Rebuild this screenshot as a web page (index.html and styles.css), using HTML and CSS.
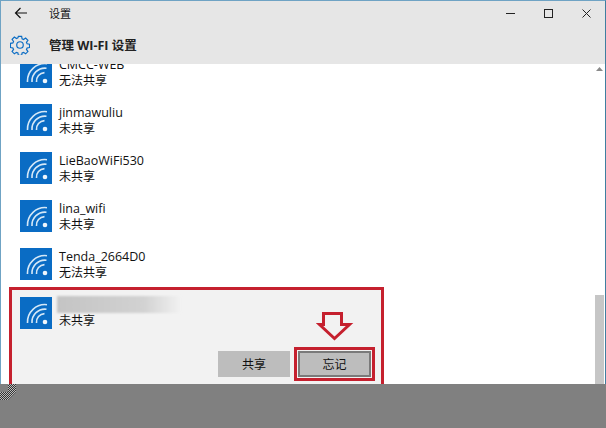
FILE: index.html
```html
<!DOCTYPE html>
<html lang="zh-CN">
<head>
    <meta charset="UTF-8">
    <meta name="viewport" content="width=device-width, initial-scale=1.0">
    <title>设置</title>
    <link rel="stylesheet" href="styles.css">
</head>
<body>
    <svg class="defs" width="0" height="0">
        <symbol id="wifi" viewBox="0 0 32 32">
            <rect width="32" height="32" fill="#0a6cc4"/>
            <g fill="none" stroke="#d5e8f7" stroke-width="1.6">
                <path d="M7.500 26A17.500 17.500 0 0 1 27 7.700"/>
                <path d="M12 26A13 13 0 0 1 26.500 12.200"/>
                <path d="M16.500 26A8.500 8.500 0 0 1 24.500 16.600"/>
            </g>
            <circle cx="25" cy="25" r="2.300" fill="#eef6fc"/>
        </symbol>
    </svg>
    <div class="window">
        <div class="titlebar">
            <svg class="back" width="14" height="12" viewBox="0 0 14 12"><path d="M13 6H1.500M6.500 1 1.500 6l5 5" fill="none" stroke="#111" stroke-width="1.200"/></svg>
            <span class="title">设置</span>
            <div class="controls">
                <span class="minimize"></span>
                <span class="maximize"></span>
                <svg width="9" height="9" viewBox="0 0 9 9"><path d="M.5.5l8 8M8.500.5l-8 8" stroke="#222" stroke-width="1"/></svg>
            </div>
        </div>
        <div class="header">
            <svg class="gear" width="20" height="20" viewBox="0 0 22 22" fill="none" stroke="#0a6cc4" stroke-width="1.300">
                <path d="M9.200 1.500h3.600l.5 2.700 1.600.7 2.300-1.600 2.500 2.500-1.600 2.300.7 1.600 2.700.5v3.600l-2.700.5-.7 1.600 1.600 2.300-2.500 2.500-2.300-1.600-1.600.7-.5 2.700H9.200l-.5-2.700-1.600-.7-2.300 1.600-2.500-2.500 1.600-2.300-.7-1.600-2.700-.5V9.200l2.700-.5.7-1.600-1.600-2.300 2.500-2.500 2.300 1.600 1.600-.7z"/>
                <circle cx="11" cy="11" r="3.600"/>
            </svg>
            <h1>管理 WI-FI 设置</h1>
        </div>
        <div class="content">
            <ul class="list">
                <li class="row">
                    <svg class="icon"><use href="#wifi"/></svg>
                    <div class="info"><div class="name">CMCC-WEB</div><div class="status">无法共享</div></div>
                </li>
                <li class="row">
                    <svg class="icon"><use href="#wifi"/></svg>
                    <div class="info"><div class="name">jinmawuliu</div><div class="status">未共享</div></div>
                </li>
                <li class="row">
                    <svg class="icon"><use href="#wifi"/></svg>
                    <div class="info"><div class="name">LieBaoWiFi530</div><div class="status">未共享</div></div>
                </li>
                <li class="row">
                    <svg class="icon"><use href="#wifi"/></svg>
                    <div class="info"><div class="name">lina_wifi</div><div class="status">未共享</div></div>
                </li>
                <li class="row">
                    <svg class="icon"><use href="#wifi"/></svg>
                    <div class="info"><div class="name">Tenda_2664D0</div><div class="status">无法共享</div></div>
                </li>
                <li class="row selected">
                    <div class="row-top">
                        <svg class="icon"><use href="#wifi"/></svg>
                        <div class="info"><div class="name blurred"></div><div class="status">未共享</div></div>
                    </div>
                    <div class="actions">
                        <button class="btn">共享</button>
                        <button class="btn forget">忘记</button>
                    </div>
                    <svg class="arrow" width="38" height="29" viewBox="0 0 38 29"><path d="M7.500 1.500H25.500V12.500H33.500L18.500 26.500 3.500 12.500H7.500Z" fill="#f2f2f2" stroke="#c5202e" stroke-width="3"/></svg>
                </li>
            </ul>
            <div class="scrollbar">
                <svg class="caret" width="7" height="4" viewBox="0 0 7 4"><path d="M0 4 3.500 0 7 4z" fill="#8a8a8a"/></svg>
                <span class="thumb"></span>
            </div>
        </div>
    </div>
    <div class="footer"><span class="glitch"></span></div>
</body>
</html>
```

FILE: styles.css
```css
* {
    box-sizing: border-box;
}
html, body {
    height: 100%;
}
body {
    margin: 0;
    display: flex;
    flex-direction: column;
    overflow: hidden;
    font-family: "Open Sans", "Noto Sans CJK SC", sans-serif;
    font-size: 12px;
    color: #111;
    background-color: #808080;
}
.defs {
    position: absolute;
}
.window {
    height: 384px;
    display: flex;
    flex-direction: column;
    background-color: #fff;
    border-top: 1px solid #6fa3c4;
    border-left: 1px solid #6fa3c4;
    border-right: 1px solid #3f7fa0;
}
.titlebar {
    height: 24px;
    display: flex;
    align-items: center;
    background-color: #e6e6e6;
    padding-left: 13px;
}
.title {
    margin-left: 21px;
    font-size: 11px;
}
.controls {
    margin-left: auto;
    display: flex;
    align-items: center;
    gap: 29px;
    padding-right: 14px;
}
.minimize {
    width: 9px;
    height: 1px;
    background-color: #222;
}
.maximize {
    width: 9px;
    height: 9px;
    border: 1px solid #222;
}
.header {
    height: 39px;
    display: flex;
    align-items: center;
    padding-left: 9px;
    background-color: #e6e6e6;
}
.header h1 {
    margin: 0 0 0 19px;
    font-size: 12.500px;
    font-weight: 700;
    color: #222;
}
.content {
    flex: 1;
    min-height: 0;
    display: flex;
    overflow: hidden;
}
.list {
    flex: 1;
    margin: -16px 0 0;
    padding: 0;
    list-style: none;
}
.row {
    height: 48px;
    display: flex;
    align-items: center;
    padding-left: 19px;
}
.icon {
    width: 32px;
    height: 32px;
    flex: none;
}
.info {
    margin-left: 7px;
    padding-top: 2px;
    line-height: 16px;
}
.name {
    height: 16px;
    font-size: 12.500px;
}
.status {
    font-size: 12px;
}
.selected {
    position: relative;
    display: block;
    width: 375px;
    height: 97px;
    margin: -1px 0 0 8px;
    padding: 6px 0 0 8px;
    background-color: #f2f2f2;
    border: 3px solid #c5202e;
    border-bottom: none;
}
.row-top {
    display: flex;
    align-items: center;
}
.blurred {
    width: 124px;
    height: 17px;
    margin: -2px 0 0 -2px;
    background: linear-gradient(to right, #c4c4c4, #d2d2d2 70%, #f2f2f2);
    filter: blur(1px);
}
.actions {
    margin-top: 22px;
    display: flex;
    justify-content: flex-end;
    gap: 8px;
    padding-right: 10px;
}
.btn {
    width: 72px;
    height: 26px;
    padding: 0;
    border: none;
    font: inherit;
    font-size: 12px;
    color: #111;
    background-color: #bdbdbd;
}
.forget {
    width: 73px;
    border: 2px solid #7a7a7a;
    outline: 3px solid #c5202e;
    outline-offset: 1px;
}
.arrow {
    position: absolute;
    top: 22px;
    left: 304px;
}
.scrollbar {
    width: 9px;
    margin-right: 1px;
    display: flex;
    flex-direction: column;
    align-items: center;
    justify-content: space-between;
    padding-top: 3px;
}
.thumb {
    width: 100%;
    height: 89px;
    background-color: #c6c6c6;
}
.footer {
    flex: 1;
    background-color: #808080;
}
.glitch {
    display: block;
    width: 16px;
    height: 16px;
    background-image: conic-gradient(#333 25%, #bbb 0 50%, #333 0 75%, #bbb 0);
    background-size: 2px 2px;
    clip-path: polygon(50% 0, 100% 0, 100% 50%, 50% 100%, 0 100%, 0 50%, 50% 50%);
}
```
